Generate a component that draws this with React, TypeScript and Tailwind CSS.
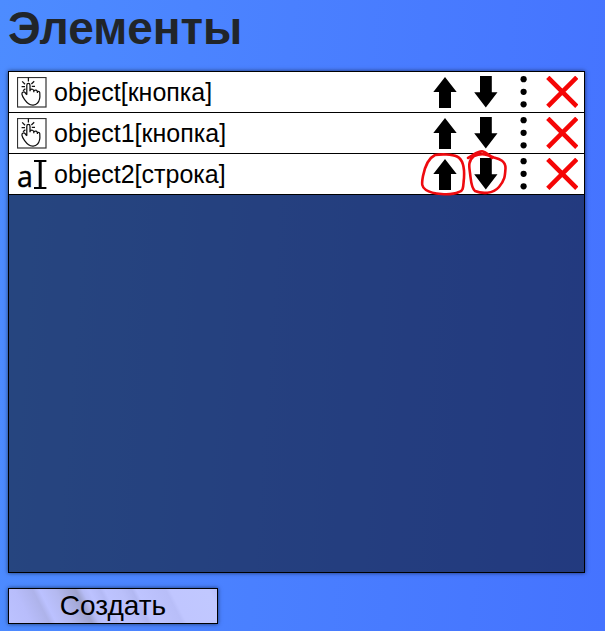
import React from "react";

function HandIcon() {
  return (
    <svg width="30" height="31" viewBox="0 0 30 31" fill="none" stroke="#111" strokeWidth="1.25">
      <rect x="0.5" y="0.5" width="28.5" height="29.5" strokeWidth="1.2" stroke="#333" />
      <path d="M11.4 0.5V4.5M5.2 4.4l2.8 2.8M17.2 4.2l-2.8 2.8M4.6 9.6H8M14.8 9.4H18M6 13.8L8.4 11.8" />
      <path d="M9.8 17.8V8.2C9.8 5.8 13 5.8 13 8.2V14.2M13 13.2C14.5 11.6 16.6 12 16.8 14V15.2M16.8 13.8C18.4 12.4 20.2 13 20.4 15V16M20.4 14.8C22 13.8 23 14.8 22.8 16.6C23.2 21 23 23.6 20.4 26.2C18.4 28.6 14.2 28.8 11.6 26.8C9.4 25.4 5.4 20.4 4.9 17.2C4.7 15 7 14.2 8.4 16L9.8 17.8" />
    </svg>
  );
}

function TextFieldIcon() {
  return (
    <div className="flex h-[31px] w-[30px] items-end">
      <span className="w-[15px] font-['Open_Sans','Noto_Sans',sans-serif] text-[28.5px] leading-[28px] [-webkit-text-stroke:0.4px_#000]">a</span>
      <svg width="14" height="31" viewBox="0 0 14 31" className="ml-[1px]" fill="none" stroke="#000" strokeWidth="2.2">
        <path d="M1 2H13.4M1 29H13.4" />
        <path d="M7.2 2V29" strokeWidth="3" />
      </svg>
    </div>
  );
}

function UpArrow() {
  return (
    <svg width="24" height="32" viewBox="0 0 24 32">
      <path d="M12 1L23.7 16H18V32H6V16H0.3Z" />
    </svg>
  );
}

function DownArrow() {
  return (
    <svg width="24" height="32" viewBox="0 0 24 32">
      <path d="M6 0H17.8V16.2H23.5L11.8 31.4L0.2 16.2H6Z" />
    </svg>
  );
}

function Dots() {
  return (
    <svg width="8" height="32" viewBox="0 0 8 32">
      <circle cx="3.6" cy="3.2" r="3.1" />
      <circle cx="3.6" cy="15.8" r="3.1" />
      <circle cx="3.6" cy="28.3" r="3.1" />
    </svg>
  );
}

function Cross() {
  return (
    <svg width="32" height="32" viewBox="0 0 32 32" stroke="#f50505" strokeWidth="4.6">
      <path d="M1.8 1.3L30.8 30.3M30.8 1.3L1.8 30.3" />
    </svg>
  );
}

function Row({ icon, label, marked = false }: { icon: React.ReactNode; label: string; marked?: boolean }) {
  return (
    <div className="relative flex h-[41px] items-center border-b border-black bg-white pl-2 text-black">
      <div className="w-[37px]">{icon}</div>
      <span className="flex-1 text-[25px] leading-[38px] whitespace-nowrap">{label}</span>
      <UpArrow />
      <div className="ml-[17px]"><DownArrow /></div>
      <div className="ml-[22px]"><Dots /></div>
      <div className="mr-[6px] ml-[18px]"><Cross /></div>
      {marked && (
        <svg className="absolute top-[-5px] left-[409px]" width="92" height="48" viewBox="0 0 92 48" fill="none" stroke="#ee0a0f" strokeWidth="2.6" strokeLinecap="round" strokeLinejoin="round">
          <path d="M17 6C23 5 34 5 39 7.5C46 11 46.5 21 46 29C45 37 46 42 41 43C32 47 14 45 8 41C3.5 38 3.5 35 5 27C7 17 11 9 17 6Z" />
          <path d="M50 9C56 6 60 1.5 65 2.5C69 3.5 71 7 76 8.5C82 10 87.5 12 87.5 19C87 27 87 31 81 38C75 45 64 45 57 42C53 39 53 31 52 24C51 17 50 12 56 7C63 4 71 5 74 9" />
        </svg>
      )}
    </div>
  );
}

export default function App() {
  return (
    <main className="flex h-[631px] w-[605px] flex-col items-start overflow-hidden bg-[linear-gradient(94deg,#4d8cff_0%,#4a80ff_45%,#4573ff_100%)] pl-2 font-['Liberation_Sans',Arial,sans-serif]">
      <h1 className="mt-[1px] h-[70px] text-[46px] leading-[54px] font-bold text-[#212529]">Элементы</h1>
      <section className="h-[502px] w-[577px] border border-black bg-black/50 shadow-[0_0_4px_rgba(0,0,0,0.6)]">
        <Row icon={<HandIcon />} label="object[кнопка]" />
        <Row icon={<HandIcon />} label="object1[кнопка]" />
        <Row icon={<TextFieldIcon />} label="object2[строка]" marked />
      </section>
      <button className="mt-[15px] h-[36px] w-[210px] border border-black bg-[linear-gradient(63deg,#bcc2ff_0%,#b8bdfb_10%,#aeb3ea_18%,#bbc1ff_21%,#b4b9f0_28%,#9fa4cf_37%,#b6bcf6_40%,#bcc2ff_43%,#b4baf5_48%,#bdc3ff_50%,#bac0fa_57%,#b2b8f2_62%,#bec4ff_64%,#b8bef8_77%,#c0c6ff_79%,#c1c8ff_96%,#b9c0fc_100%)] text-[28px] leading-[34px] text-black shadow-[0_0_4px_rgba(0,0,0,0.6)]">
        Создать
      </button>
    </main>
  );
}
